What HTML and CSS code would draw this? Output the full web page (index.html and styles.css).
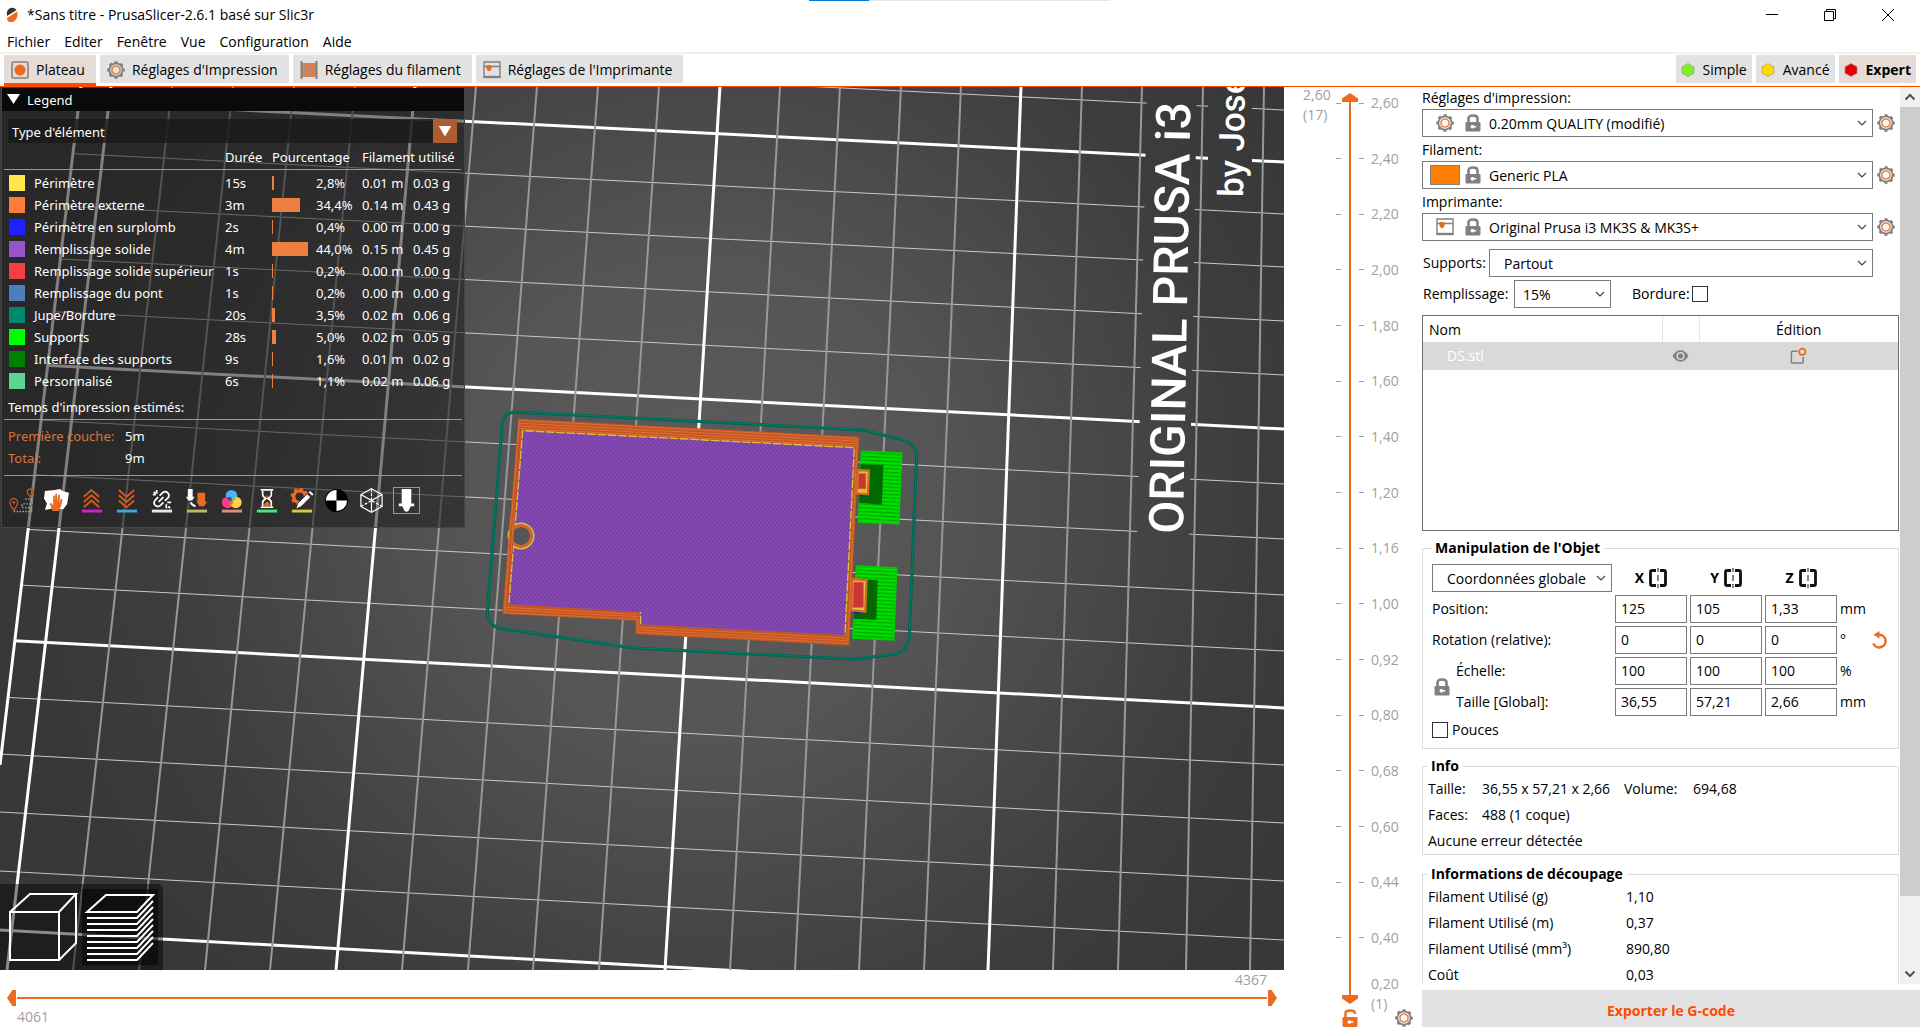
FILE: index.html
```html
<!DOCTYPE html>
<html lang="fr">
<head>
    <meta charset="UTF-8">
    <meta name="viewport" content="width=device-width, initial-scale=1.0">
    <title>*Sans titre - PrusaSlicer-2.6.1 basé sur Slic3r</title>
    <link rel="stylesheet" href="styles.css">
</head>
<body>
    <!-- shared icons -->
    <svg class="defs" aria-hidden="true">
        <symbol id="gear" viewBox="0 0 20 20">
            <circle cx="10" cy="10" r="7.4" fill="none" stroke="#808080" stroke-width="2"/>
            <circle cx="10" cy="10" r="8.6" fill="none" stroke="#808080" stroke-width="2.4" stroke-dasharray="3.4 3.35" stroke-dashoffset="1.7"/>
            <path d="M8.2 5.6h3.6l2.6 2.6v3.6l-2.6 2.6H8.2l-2.6-2.6V8.2z" fill="none" stroke="#ed6b21" stroke-width="1.4"/>
        </symbol>
        <symbol id="lock" viewBox="0 0 16 18">
            <path d="M3.5 9V4.5Q3.5 1.5 8 1.5T12.5 4.5V9" fill="none" stroke="#808080" stroke-width="2.6"/>
            <rect x="0.5" y="8" width="15" height="9.5" rx="1" fill="#808080"/>
            <path d="M5.5 12.7a2 2 0 0 1 3.7-.8h2v1.6h-2a2 2 0 0 1-3.7-.8z" fill="#fff"/>
        </symbol>
        <symbol id="printer" viewBox="0 0 18 18">
            <path d="M1 1h16v15H1zM1 5.5h16" fill="none" stroke="#808080" stroke-width="1.4"/>
            <path d="M0.5 16h17" stroke="#808080" stroke-width="2.4"/>
            <path d="M3.5 4h5v4l-1.5 2H5L3.5 8z" fill="#ed6b21"/>
        </symbol>
        <symbol id="chevron" viewBox="0 0 10 10">
            <path d="M1 3l4 4 4-4" fill="none" stroke="#444" stroke-width="1.2"/>
        </symbol>
        <symbol id="mirror" viewBox="0 0 18 20">
            <path d="M7 2.5H3Q1.5 2.5 1.5 4v12q0 1.5 1.5 1.5h4M11 2.5h4q1.5 0 1.5 1.5v12q0 1.5-1.5 1.5h-4" fill="none" stroke="#111" stroke-width="2.8"/>
            <path d="M9 0v4M9 7v6M9 16v4" stroke="#555" stroke-width="1.4"/>
        </symbol>
        <symbol id="hexagon" viewBox="0 0 14 14">
            <path d="M7 .5l6 3.3v6.4L7 13.5 1 10.2V3.8z" stroke="#999" stroke-width=".6"/>
        </symbol>
    </svg>

    <header>
        <div class="progress"><span></span></div>
        <div class="titlebar">
            <svg class="logo" viewBox="0 0 12 16">
                <path d="M1 9C0 4 3 0 7 1c2 0 3 1 3.5 2z" fill="#333"/>
                <path d="M1 11l10-6.500C13 10 9 16 4 15c-2 0-3-2-3-4z" fill="#ed6b21"/>
            </svg>
            <h1>*Sans titre - PrusaSlicer-2.6.1 basé sur Slic3r</h1>
            <div class="window-buttons">
                <button type="button" aria-label="Réduire"><svg viewBox="0 0 12 12"><path d="M0 5.5h12" stroke="#000"/></svg></button>
                <button type="button" aria-label="Restaurer"><svg viewBox="0 0 12 12"><path d="M.5 2.5h9v9h-9zM2.5 2.5v-2h9v9h-2" fill="none" stroke="#000"/></svg></button>
                <button type="button" aria-label="Fermer"><svg viewBox="0 0 12 12"><path d="M0 0l12 12M12 0L0 12" stroke="#000"/></svg></button>
            </div>
        </div>
        <nav class="menubar">
            <a href="#">Fichier</a>
            <a href="#">Editer</a>
            <a href="#">Fenêtre</a>
            <a href="#">Vue</a>
            <a href="#">Configuration</a>
            <a href="#">Aide</a>
        </nav>
        <div class="toolbar">
            <button type="button" class="tab active">
                <svg viewBox="0 0 18 18"><rect x="1" y="1" width="16" height="16" rx="1.5" fill="none" stroke="#808080" stroke-width="1.6"/><circle cx="9" cy="9" r="5.5" fill="#ed6b21"/></svg>
                Plateau
            </button>
            <button type="button" class="tab"><svg><use href="#gear"/></svg>Réglages d'Impression</button>
            <button type="button" class="tab">
                <svg viewBox="0 0 18 18"><path d="M3 2v14M6 2v14M9 2v14M12 2v14M15 2v14" stroke="#e0804a" stroke-width="2"/><path d="M1.5 0v18M16.5 0v18" stroke="#808080" stroke-width="2"/><path d="M4.5 2v14M7.5 2v14M10.5 2v14M13.5 2v14" stroke="#a98a76" stroke-width="1"/></svg>
                Réglages du filament
            </button>
            <button type="button" class="tab"><svg><use href="#printer"/></svg>Réglages de l'Imprimante</button>
            <div class="modes">
                <button type="button" class="mode simple"><svg><use href="#hexagon"/></svg>Simple</button>
                <button type="button" class="mode avance"><svg><use href="#hexagon"/></svg>Avancé</button>
                <button type="button" class="mode expert active"><svg><use href="#hexagon"/></svg>Expert</button>
            </div>
        </div>
    </header>

    <main>
        <section class="preview">
            <div class="scene">
                <svg class="bed" viewBox="0 87 1284 883" preserveAspectRatio="xMinYMin slice">
                    <defs>
                        <radialGradient id="bedShade" gradientUnits="userSpaceOnUse" cx="700" cy="500" r="680">
                            <stop offset="0" stop-color="#5c5c5c"/>
                            <stop offset=".35" stop-color="#555"/>
                            <stop offset=".8" stop-color="#3d3d3d"/>
                            <stop offset="1" stop-color="#383838"/>
                        </radialGradient>
                        <pattern id="infill" width="9" height="9" patternUnits="userSpaceOnUse" patternTransform="rotate(-42)">
                            <rect width="9" height="9" fill="#8a4cb9"/>
                            <rect width="4" height="9" fill="#733d9e"/>
                        </pattern>
                        <pattern id="support" width="11" height="11" patternUnits="userSpaceOnUse" patternTransform="rotate(3)">
                            <rect width="11" height="11" fill="#00e000"/>
                            <rect width="11" height="4" fill="#00a800"/>
                        </pattern>
                        <clipPath id="bedArea"><path d="M81 86H1284V970H0V765z"/></clipPath>
                    </defs>
                    <rect y="87" width="1284" height="883" fill="url(#bedShade)"/>

                    <g clip-path="url(#bedArea)" fill="none">
                        <path class="thin-h" d="M0 46L1284 110M0 150L1284 214M0 203L1284 267M0 256L1284 321M0 309L1284 375M0 418L1284 484M0 473L1284 539M0 528L1284 595M0 584L1284 651M0 697L1284 765M0 754L1284 823M0 812L1284 881M0 871L1284 940"/>
                        <path class="thick" d="M0 98L1284 162M0 363L1284 429M0 640L1284 708M0 930L1284 1001"/>
                    </g>
                    <!-- gaps left around the printed bed labels -->
                    <path d="M1147 87H1197L1189 540H1137z" fill="url(#bedShade)"/>
                    <path d="M1208 87H1252V205H1208z" fill="url(#bedShade)"/>
                    <g fill="none">
                        <path class="thin-v" d="M172 86L73 970M233 86L139 970M294 86L205 970M355 86L270 970M476 86L402 970M537 86L468 970M598 86L533 970M659 86L599 970M780 86L730 970M840 86L795 970M901 86L859 970M961 86L924 970M1082 86L1053 970M1142 86L1118 970M1203 86L1186 970M1264 86L1250 970"/>
                        <path class="thick" d="M81 86L0 765M111 86L7 970M415 86L336 970M720 86L665 970M1021 86L988 970"/>
                    </g>
                    <text class="bed-title" transform="translate(1183 534) rotate(-89)">ORIGINAL PRUSA i3</text>
                    <text class="bed-author" transform="translate(1243 197) rotate(-89)">by Josef</text>

                    <g transform="translate(470 380) scale(.3333)">
                        <path d="M135 96L1180 150L1305 181Q1338 195 1340 225L1318 775L1302 810L1278 822L1150 838L490 804L85 744Q50 730 52 695L97 130Q101 97 135 96z" fill="none" stroke="#00644f" stroke-width="9"/>
                        <path d="M135 95L1180 149L1305 180Q1338 194 1340 224L1318 775L1302 809L1278 821L1150 837L490 803L85 743Q50 729 52 694L97 129Q101 96 135 95z" fill="none" stroke="#008068" stroke-width="3"/>

                        <path d="M1175 214L1295 219L1286 431L1166 426z" fill="url(#support)" stroke="#00d000" stroke-width="5"/>
                        <path d="M1160 558L1280 564L1271 780L1149 774z" fill="url(#support)" stroke="#00d000" stroke-width="5"/>
                        <path d="M1172 252L1240 256L1236 374L1167 368zM1160 598L1223 600L1219 720L1150 716z" fill="#006a00"/>
                        <path d="M1168 346h28M1150 697h28" stroke="#1a1ab4" stroke-width="5"/>

                        <path d="M145 116L1168 170L1138 797L497 763V722L97 702z" fill="#bf5726"/>
                        <path d="M148 121L1162 175L1133 790L503 757V718L103 698zM151 130L1159 183M152 138L1158 191M153 146L1158 198M108 690L505 710M103 682L500 703M505 742L1128 774M506 750L1128 782" fill="none" stroke="#e56d30" stroke-width="3"/>
                        <path d="M158 152L1153 203L1125 765L512 733L510 696L115 672z" fill="url(#infill)"/>
                        <path d="M117 670L158 152L1153 203L1125 765M512 733L511 696" fill="none" stroke="#d9c23c" stroke-width="4" stroke-dasharray="26 5"/>
                        <circle cx="153" cy="468" r="38" fill="#555" stroke="#d9c23c" stroke-width="5"/>
                        <circle cx="153" cy="468" r="31" fill="none" stroke="#d96429" stroke-width="8"/>
                        <path d="M128 415L120 522" stroke="#bf5726" stroke-width="15"/>
                        <path d="M131 415L123 522M122 415L114 522" stroke="#e56d30" stroke-width="3"/>

                        <path d="M1164 270L1197 272L1194 343L1159 340z" fill="#d9c23c" stroke="#d96429" stroke-width="7"/>
                        <path d="M1167 281H1187V326H1165z" fill="#cc3333" stroke="#b3642a" stroke-width="2"/>
                        <path d="M1147 597L1190 600L1186 695L1144 691z" fill="#d9c23c" stroke="#d96429" stroke-width="7"/>
                        <path d="M1152 607H1180V682H1149z" fill="#cc3333" stroke="#b3642a" stroke-width="2"/>
                    </g>
                </svg>

                <div class="legend">
                    <h2>Legend</h2>
                    <div class="legend-select">
                        <select aria-label="Type d'affichage"><option>Type d'élément</option></select>
                        <span class="legend-arrow"></span>
                    </div>
                    <table class="features">
                        <colgroup><col class="c-swatch"><col class="c-name"><col class="c-time"><col class="c-bar"><col class="c-percent"><col class="c-length"><col></colgroup>
                        <thead>
                            <tr><th></th><th></th><th>Durée</th><th colspan="2">Pourcentage</th><th colspan="2">Filament utilisé</th></tr>
                        </thead>
                        <tbody>
                            <tr><td><i class="sw perimeter"></i></td><td>Périmètre</td><td>15s</td><td><i class="bar" style="width: 2px"></i></td><td>2,8%</td><td>0.01 m</td><td>0.03 g</td></tr>
                            <tr><td><i class="sw external"></i></td><td>Périmètre externe</td><td>3m</td><td><i class="bar" style="width: 28px"></i></td><td>34,4%</td><td>0.14 m</td><td>0.43 g</td></tr>
                            <tr><td><i class="sw overhang"></i></td><td>Périmètre en surplomb</td><td>2s</td><td><i class="bar" style="width: 1px"></i></td><td>0,4%</td><td>0.00 m</td><td>0.00 g</td></tr>
                            <tr><td><i class="sw solid"></i></td><td>Remplissage solide</td><td>4m</td><td><i class="bar" style="width: 36px"></i></td><td>44,0%</td><td>0.15 m</td><td>0.45 g</td></tr>
                            <tr><td><i class="sw top"></i></td><td>Remplissage solide supérieur</td><td>1s</td><td><i class="bar" style="width: 1px"></i></td><td>0,2%</td><td>0.00 m</td><td>0.00 g</td></tr>
                            <tr><td><i class="sw bridge"></i></td><td>Remplissage du pont</td><td>1s</td><td><i class="bar" style="width: 1px"></i></td><td>0,2%</td><td>0.00 m</td><td>0.00 g</td></tr>
                            <tr><td><i class="sw skirt"></i></td><td>Jupe/Bordure</td><td>20s</td><td><i class="bar" style="width: 3px"></i></td><td>3,5%</td><td>0.02 m</td><td>0.06 g</td></tr>
                            <tr><td><i class="sw supports"></i></td><td>Supports</td><td>28s</td><td><i class="bar" style="width: 4px"></i></td><td>5,0%</td><td>0.02 m</td><td>0.05 g</td></tr>
                            <tr><td><i class="sw interface"></i></td><td>Interface des supports</td><td>9s</td><td><i class="bar" style="width: 1px"></i></td><td>1,6%</td><td>0.01 m</td><td>0.02 g</td></tr>
                            <tr><td><i class="sw custom"></i></td><td>Personnalisé</td><td>6s</td><td><i class="bar" style="width: 1px"></i></td><td>1,1%</td><td>0.02 m</td><td>0.06 g</td></tr>
                        </tbody>
                    </table>
                    <h3>Temps d'impression estimés:</h3>
                    <dl>
                        <dt>Première couche:</dt><dd>5m</dd>
                        <dt>Total:</dt><dd>9m</dd>
                    </dl>
                    <div class="tools">
                        <button type="button" aria-label="Déplacements"><svg viewBox="0 0 26 26"><path d="M5 23q-4-5-4-8a4 4 0 0 1 8 0q0 3-4 8z" fill="none" stroke="#b4552a" stroke-width="1.5"/><circle cx="5" cy="15" r="1.5" fill="#b4552a"/><path d="M22 9q-3-3-3-5a3 3 0 0 1 6 0q0 2-3 5z" fill="none" stroke="#b4552a" stroke-width="1.5"/><path d="M5 24.5h18q3-4-2-4h-5q-4 0-2-4h8q4-1 1-5h-7" fill="none" stroke="#aaa" stroke-width="1.5" stroke-dasharray="1.5 1.5"/></svg></button>
                        <button type="button" aria-label="Essuyage"><svg viewBox="0 0 26 26"><path d="M1 3l10-1 6-1 2 2 7 2-2 12-4 5-10-1-9 2 2-7-3-5z" fill="#fff"/><path d="M9 24q-2-5-3-8l1.500-.5L9.500 18V8h1.800v6l.5-8h1.800l.5 8 .8-7h1.800l-.4 8 1.500-4 1.500 1-2 8-2 4z" fill="#ed6b21"/></svg></button>
                        <button type="button" aria-label="Rétractations"><svg viewBox="0 0 26 26"><path d="M5 9l8-7 8 7M5 14.5l8-7 8 7M5 20l8-7 8 7" fill="none" stroke="#d4591c" stroke-width="2"/><path d="M3 24h21" stroke="#cc22cc" stroke-width="3"/></svg></button>
                        <button type="button" aria-label="Dérétractations"><svg viewBox="0 0 26 26"><path d="M5 2l8 7 8-7M5 7.5l8 7 8-7M5 13l8 7 8-7" fill="none" stroke="#d4591c" stroke-width="2"/><path d="M3 24h21" stroke="#44a8d0" stroke-width="3"/></svg></button>
                        <button type="button" aria-label="Coutures"><svg viewBox="0 0 26 26"><path d="M11 8l3-3q3-2.500 5.500 0t0 5.500l-3 3M15 15l-3 3q-3 2.500-5.500 0t0-5.500l3-3M10 14.500l5-5M8 2v4M4 7h3M19 15h4M18 17v4M5 4l2 2M20 19l2 2" fill="none" stroke="#fff" stroke-width="1.8"/><path d="M3 24h21" stroke="#e6e6e6" stroke-width="3"/></svg></button>
                        <button type="button" aria-label="Changements d'outil"><svg viewBox="0 0 26 26"><path d="M4 1h5v8h2l-2.500 4h-4L2 9h2z" fill="#fff"/><path d="M14 5h8v9h2l-3 5h-5l-3-5h1z" fill="#ed6b21"/><path d="M7 15q1 3 5 4" fill="none" stroke="#fff" stroke-width="2"/><path d="M3 24h21" stroke="#c0b860" stroke-width="3"/></svg></button>
                        <button type="button" aria-label="Changements de couleur"><svg viewBox="0 0 26 26"><circle cx="13" cy="8" r="6" fill="#48b4f8"/><circle cx="9" cy="15" r="6" fill="#ff3b85"/><circle cx="17.5" cy="15" r="6" fill="#ffd048"/><path d="M13 11.500q3 3 0 7q-3-4 0-7z" fill="#ed6b21"/><path d="M12.500 10q3-1 5.500 0-1 3-4 4z" fill="#7cc060"/><path d="M8 10q3-1 5 0v4q-4-1-5-4z" fill="#2d4ea0"/><path d="M3 24h21" stroke="#d99080" stroke-width="3"/></svg></button>
                        <button type="button" aria-label="Pauses d'impression"><svg viewBox="0 0 26 26"><path d="M7 2h13M7 20h13M9 3v4q0 2 3.500 4Q9 13 9 15v4M18 3v4q0 2-3.500 4 3.500 2 3.500 4v4" fill="none" stroke="#fff" stroke-width="1.7"/><path d="M10.500 19q0-4 3-4.500t3 4.500zM11.500 8h4l-2 2z" fill="#ed6b21"/><path d="M3 24h21" stroke="#48e878" stroke-width="3"/></svg></button>
                        <button type="button" aria-label="G-code personnalisé"><svg viewBox="0 0 26 26"><circle cx="11" cy="9" r="6" fill="none" stroke="#ed6b21" stroke-width="3.5" stroke-dasharray="28 10" stroke-dashoffset="-9"/><circle cx="11" cy="9" r="8" fill="none" stroke="#ed6b21" stroke-width="2.6" stroke-dasharray="3.2 3.08"/><path d="M9 16L19 6l3.500 3.500-10 10L7 22z" fill="#fff" stroke="#2b2b2b"/><path d="M20.500 4.500L22 3l3.500 3.500L24 8z" fill="#fff"/><path d="M3 24h21" stroke="#d8c840" stroke-width="3"/></svg></button>
                        <button type="button" aria-label="Centre de gravité"><svg viewBox="0 0 26 26"><circle cx="13" cy="13" r="12" fill="#000"/><path d="M13 13V2A11 11 0 0 0 2 13zM13 13h11a11 11 0 0 1-11 11z" fill="#fff"/></svg></button>
                        <button type="button" aria-label="Coques"><svg viewBox="0 0 26 26"><path d="M13 .8l11 6v12.400l-11 6-11-6V6.800zM2 6.800L13 13l11-6.200M13 13v12" fill="none" stroke="#fff" stroke-width="1.3"/><path d="M2 19.200L13 13l11 6.200M13 1v12" fill="none" stroke="#fff" stroke-width="1.3" stroke-dasharray="3 1.5"/></svg></button>
                        <button type="button" class="selected" aria-label="Marqueur d'outil"><svg viewBox="0 0 26 26"><path d="M8 1h10v15h3v3h-3.500L15 24q-2 1.500-4 0l-2.500-5H5v-3h3z" fill="#fff"/></svg></button>
                    </div>
                </div>

                <div class="views">
                    <button type="button" aria-label="Vue éditeur 3D"><svg viewBox="0 0 76 76"><path d="M6 23h49v48H6zM6 23L26 5h46L55 23M72 5v49L55 71" fill="none" stroke="#fff" stroke-width="2"/></svg></button>
                    <button type="button" class="current" aria-label="Aperçu"><svg viewBox="0 0 76 76"><path d="M5 23L24 6h47L55 23zM5 29h50l16-17M5 35h50l16-17M5 41h50l16-17M5 47h50l16-17M5 53h50l16-17M5 59h50l16-17M5 65h50l16-17M5 71h50l16-17" fill="none" stroke="#fff" stroke-width="2"/></svg></button>
                </div>
            </div>

            <div class="moves">
                <output class="moves-max">4367</output>
                <div class="moves-track">
                    <input class="lower" type="range" min="4061" max="4367" value="4061" aria-label="Premier mouvement">
                    <input class="upper" type="range" min="4061" max="4367" value="4367" aria-label="Dernier mouvement">
                </div>
                <output class="moves-min">4061</output>
            </div>
        </section>

        <section class="layers">
            <p class="layer-max">2,60<br>(17)</p>
            <ol>
                <li><i></i><i></i>2,60</li>
                <li><i></i><i></i>2,40</li>
                <li><i></i><i></i>2,20</li>
                <li><i></i><i></i>2,00</li>
                <li><i></i><i></i>1,80</li>
                <li><i></i><i></i>1,60</li>
                <li><i></i><i></i>1,40</li>
                <li><i></i><i></i>1,20</li>
                <li><i></i><i></i>1,16</li>
                <li><i></i><i></i>1,00</li>
                <li><i></i><i></i>0,92</li>
                <li><i></i><i></i>0,80</li>
                <li><i></i><i></i>0,68</li>
                <li><i></i><i></i>0,60</li>
                <li><i></i><i></i>0,44</li>
                <li><i></i><i></i>0,40</li>
            </ol>
            <p class="layer-min">0,20<br>(1)</p>
            <div class="layers-track">
                <input class="lower" type="range" min="1" max="17" value="1" aria-label="Couche inférieure">
                <input class="upper" type="range" min="1" max="17" value="17" aria-label="Couche supérieure">
            </div>
            <button type="button" class="layer-lock" aria-label="Verrouiller"><svg viewBox="0 0 16 18"><path d="M3.500 9V4q0-2.500 4.500-2.500t5 2.500v1" fill="none" stroke="#ed6b21" stroke-width="2.4"/><rect x=".5" y="8" width="15" height="10" rx="1" fill="#ed6b21"/><path d="M5.500 13a2 2 0 0 1 3.700-.8h2v1.600h-2a2 2 0 0 1-3.700-.8z" fill="#fff"/></svg></button>
            <button type="button" class="layer-gear" aria-label="Options"><svg><use href="#gear"/></svg></button>
        </section>

        <aside>
            <div class="scroll-area">
                <div class="settings">
                    <div class="preset">
                        <label for="print">Réglages d'impression:</label>
                        <div class="preset-row">
                            <div class="combo"><svg class="icon"><use href="#gear"/></svg><svg class="lock"><use href="#lock"/></svg><select id="print"><option>0.20mm QUALITY (modifié)</option></select><svg class="chev"><use href="#chevron"/></svg></div>
                            <button type="button" aria-label="Modifier"><svg><use href="#gear"/></svg></button>
                        </div>
                    </div>
                    <div class="preset">
                        <label for="filament">Filament:</label>
                        <div class="preset-row">
                            <div class="combo"><span class="color"></span><svg class="lock"><use href="#lock"/></svg><select id="filament"><option>Generic PLA</option></select><svg class="chev"><use href="#chevron"/></svg></div>
                            <button type="button" aria-label="Modifier"><svg><use href="#gear"/></svg></button>
                        </div>
                    </div>
                    <div class="preset">
                        <label for="machine">Imprimante:</label>
                        <div class="preset-row">
                            <div class="combo"><svg class="icon"><use href="#printer"/></svg><svg class="lock"><use href="#lock"/></svg><select id="machine"><option>Original Prusa i3 MK3S &amp; MK3S+</option></select><svg class="chev"><use href="#chevron"/></svg></div>
                            <button type="button" aria-label="Modifier"><svg><use href="#gear"/></svg></button>
                        </div>
                    </div>

                    <div class="option-row supports-row">
                        <label for="supports">Supports:</label>
                        <div class="combo supports-combo"><select id="supports"><option>Partout</option></select><svg class="chev"><use href="#chevron"/></svg></div>
                    </div>
                    <div class="option-row infill-row">
                        <label for="infillRate">Remplissage:</label>
                        <div class="combo infill-combo"><select id="infillRate"><option>15%</option></select><svg class="chev"><use href="#chevron"/></svg></div>
                        <label class="brim" for="brim">Bordure:</label>
                        <input type="checkbox" id="brim">
                    </div>

                    <div class="objects">
                        <table>
                            <thead><tr><th class="o-name">Nom</th><th class="o-eye"></th><th class="o-edit">Édition</th></tr></thead>
                            <tbody>
                                <tr>
                                    <td>DS.stl</td>
                                    <td><svg class="eye" viewBox="0 0 18 14"><path d="M.5 7Q4 1 9 1t8.500 6Q14 13 9 13T.5 7z" fill="#808080"/><circle cx="9" cy="7" r="3.5" fill="#808080" stroke="#d9d9d9" stroke-width="1.6"/></svg></td>
                                    <td><svg class="edit" viewBox="0 0 18 18"><path d="M8 4H2.500Q1.500 4 1.500 5v10.500q0 1 1 1H13q1 0 1-1V10" fill="none" stroke="#808080" stroke-width="1.6"/><circle cx="13" cy="4.5" r="3.3" fill="none" stroke="#ed6b21" stroke-width="1.8"/></svg></td>
                                </tr>
                            </tbody>
                        </table>
                    </div>

                    <fieldset class="manipulation">
                        <legend>Manipulation de l'Objet</legend>
                        <div class="axes">
                            <div class="combo coords"><select aria-label="Repère"><option>Coordonnées globales</option></select><svg class="chev"><use href="#chevron"/></svg></div>
                            <b>X <svg><use href="#mirror"/></svg></b>
                            <b>Y <svg><use href="#mirror"/></svg></b>
                            <b>Z <svg><use href="#mirror"/></svg></b>
                            <span class="unit"></span>

                            <label class="wide" for="px">Position:</label>
                            <input type="text" id="px" value="125">
                            <input type="text" value="105" aria-label="Position Y">
                            <input type="text" value="1,33" aria-label="Position Z">
                            <span class="unit">mm</span>

                            <label class="wide" for="rx">Rotation (relative):</label>
                            <input type="text" id="rx" value="0">
                            <input type="text" value="0" aria-label="Rotation Y">
                            <input type="text" value="0" aria-label="Rotation Z">
                            <span class="unit">°<button type="button" aria-label="Réinitialiser la rotation"><svg viewBox="0 0 18 20"><path d="M6 4.500h3.500a6.700 6.700 0 1 1-7 9" fill="none" stroke="#ed6b21" stroke-width="2.6"/><path d="M2.500 4.500L9 .5v8z" fill="#ed6b21"/></svg></button></span>

                            <svg class="scale-lock"><use href="#lock"/></svg>
                            <label for="sx">Échelle:</label>
                            <input type="text" id="sx" value="100">
                            <input type="text" value="100" aria-label="Échelle Y">
                            <input type="text" value="100" aria-label="Échelle Z">
                            <span class="unit">%</span>

                            <label for="tx">Taille [Global]:</label>
                            <input type="text" id="tx" value="36,55">
                            <input type="text" value="57,21" aria-label="Taille Y">
                            <input type="text" value="2,66" aria-label="Taille Z">
                            <span class="unit">mm</span>
                        </div>
                        <label class="inches"><input type="checkbox">Pouces</label>
                    </fieldset>

                    <fieldset class="info">
                        <legend>Info</legend>
                        <p><span class="key">Taille:</span><span class="size">36,55 x 57,21 x 2,66</span><span class="volume">Volume:</span>694,68</p>
                        <p><span class="key">Faces:</span>488 (1 coque)</p>
                        <p>Aucune erreur détectée</p>
                    </fieldset>

                    <fieldset class="info slicing">
                        <legend>Informations de découpage</legend>
                        <p><span>Filament Utilisé (g)</span>1,10</p>
                        <p><span>Filament Utilisé (m)</span>0,37</p>
                        <p><span>Filament Utilisé (mm³)</span>890,80</p>
                        <p><span>Coût</span>0,03</p>
                    </fieldset>
                </div>
                <div class="scrollbar">
                    <svg viewBox="0 0 20 20"><path d="M5.500 12.500L10 8l4.500 4.500" fill="none" stroke="#505050" stroke-width="2"/></svg>
                    <div class="thumb"></div>
                    <svg viewBox="0 0 20 20"><path d="M5.500 7.500L10 12l4.500-4.500" fill="none" stroke="#505050" stroke-width="2"/></svg>
                </div>
            </div>
            <button type="button" class="export">Exporter le G-code</button>
        </aside>
    </main>
</body>
</html>
```

FILE: styles.css
```css
* {
    box-sizing: border-box;
}
body {
    margin: 0;
    height: 100vh;
    display: flex;
    flex-direction: column;
    overflow: hidden;
    background: #fff;
    color: #000;
    font-family: "Open Sans", "Noto Sans", sans-serif;
    font-size: 14px;
    line-height: 20px;
}
h1, h2, h3, p, ol, dl, dd {
    margin: 0;
    padding: 0;
    font-size: inherit;
    font-weight: normal;
}
button, input, select {
    font: inherit;
    color: inherit;
    margin: 0;
}
button {
    padding: 0;
    border: none;
    background: none;
}
svg {
    display: block;
    flex: none;
}
.defs {
    position: absolute;
    width: 0;
    height: 0;
}

/* header */
.progress {
    position: absolute;
    top: 0;
    left: 809px;
    width: 301px;
    height: 1px;
    background: #e5e5e5;
}
.progress span {
    display: block;
    width: 60px;
    height: 1px;
    background: #0078d7;
}
.titlebar {
    display: flex;
    align-items: center;
    height: 29px;
    padding-left: 6px;
    gap: 9px;
}
.logo {
    width: 12px;
    height: 16px;
}
.window-buttons {
    display: flex;
    margin-left: auto;
    padding-right: 3px;
}
.window-buttons button {
    display: flex;
    justify-content: center;
    width: 58px;
}
.window-buttons svg {
    width: 12px;
    height: 12px;
}
.menubar {
    display: flex;
    gap: 14px;
    height: 25px;
    padding: 3px 7px 0;
    border-bottom: 2px solid #f0f0f0;
}
.menubar a {
    color: #000;
    text-decoration: none;
}
.toolbar {
    display: flex;
    gap: 4px;
    height: 33px;
    padding: 1px 4px 0;
    border-bottom: 1px solid #ff4a00;
}
.tab, .mode {
    display: flex;
    align-items: center;
    height: 28px;
    padding-top: 1px;
    background: #e2e2e2;
}
.tab {
    gap: 7px;
    padding-left: 7px;
    padding-right: 11px;
}
.tab svg {
    width: 18px;
    height: 18px;
}
.tab.active {
    height: 31px;
    border-bottom: 3px solid #ff4a00;
}
.tab.active, .mode.active {
    background: #e5dcd8;
}
.modes {
    display: flex;
    gap: 4px;
    margin-left: auto;
}
.mode {
    gap: 8px;
    padding-left: 5px;
    padding-right: 5px;
}
.mode svg {
    width: 14px;
    height: 14px;
}
.simple { fill: #7cf025; }
.avance { fill: #ffdc00; }
.expert { fill: #e70000; }
.expert {
    font-weight: bold;
}

main {
    flex: 1;
    display: flex;
    min-height: 0;
}

/* 3D preview */
.preview {
    flex: 1;
    display: flex;
    flex-direction: column;
    min-width: 0;
}
.scene {
    flex: 1;
    position: relative;
    min-height: 0;
    overflow: hidden;
    background: #3d3d3d;
}
.bed {
    width: 100%;
    height: 100%;
}
.thin-h {
    stroke: #c8c8c8;
    stroke-width: 1;
}
.thin-v {
    stroke: #989898;
    stroke-width: 2;
}
.thick {
    stroke: #fff;
    stroke-width: 3;
}
.bed-title, .bed-author {
    font-family: Roboto, sans-serif;
    font-weight: 500;
    fill: #fff;
}
.bed-title {
    font-size: 48px;
}
.bed-author {
    font-size: 35px;
}

.legend {
    position: absolute;
    top: 1px;
    left: 1px;
    width: 464px;
    height: 440px;
    background: rgba(29, 29, 29, 0.56);
    border: 1px solid #45454d;
    border-top: none;
    color: #fff;
    font-family: "Noto Sans", sans-serif;
    font-size: 13px;
}
.legend h2 {
    display: flex;
    align-items: center;
    gap: 7px;
    height: 23px;
    padding: 1px 5px 0;
    background: #0a0a0a;
}
.legend h2::before {
    content: "";
    width: 13px;
    height: 10px;
    margin-top: -2px;
    background: #fff;
    clip-path: polygon(0 0, 100% 0, 50% 100%);
}
.legend-select {
    display: flex;
    height: 24px;
    margin: 8px 7px 0 6px;
    background: rgba(25, 25, 25, 0.8);
}
.legend-select select {
    flex: 1;
    padding: 2px 4px 0;
    border: none;
    background: none;
    appearance: none;
}
.legend-arrow {
    display: flex;
    justify-content: center;
    align-items: center;
    width: 24px;
    background: #ad5d31;
}
.legend-arrow::before {
    content: "";
    width: 13px;
    height: 11px;
    background: #fff;
    clip-path: polygon(0 0, 100% 0, 50% 100%);
}
.features {
    width: 457px;
    margin: 2px 2px 0;
    border-collapse: collapse;
    table-layout: fixed;
}
.features th {
    height: 24px;
    padding: 0;
    font-weight: normal;
    text-align: left;
    white-space: nowrap;
    border-bottom: 1px solid #ed8040;
}
.features td {
    height: 22px;
    padding: 0;
    white-space: nowrap;
}
.features tbody::before {
    content: "";
    display: block;
    height: 2px;
}
.c-swatch { width: 30px; }
.c-name { width: 191px; }
.c-time { width: 47px; }
.c-bar { width: 44px; }
.c-percent { width: 46px; }
.c-length { width: 51px; }
.sw {
    display: block;
    width: 16px;
    height: 16px;
    margin-left: 5px;
}
.bar {
    display: block;
    height: 14px;
    background: #ed8040;
}
.perimeter { background: #ffe64d; }
.external { background: #ff7d38; }
.overhang { background: #1f1fff; }
.solid { background: #9654cc; }
.top { background: #f04040; }
.bridge { background: #4d80ba; }
.skirt { background: #00876e; }
.supports { background: #00ff00; }
.interface { background: #008000; }
.custom { background: #5ed194; }
.legend h3 {
    margin: 2px 2px 0;
    padding: 3px 4px 2px;
    border-bottom: 1px solid #ed8040;
}
.legend dl {
    display: grid;
    grid-template-columns: 117px 1fr;
    margin: 0 2px;
    padding: 5px 4px 6px;
    line-height: 22px;
    border-bottom: 1px solid #ed8040;
}
.legend dt {
    color: #d9743c;
}
.tools {
    display: flex;
    gap: 8px;
    padding: 11px 6px 0;
}
.tools button {
    width: 27px;
    height: 27px;
    border: 1px solid transparent;
}
.tools svg {
    width: 25px;
    height: 25px;
}
.tools .selected {
    border-color: #ed8040;
}

.views {
    position: absolute;
    left: 0;
    bottom: 0;
    display: flex;
    gap: 2px;
    padding: 5px 5px 5px 4px;
    background: rgba(0, 0, 0, 0.45);
    border-top-right-radius: 6px;
}
.views button, .views svg {
    width: 76px;
    height: 76px;
}
.views .current {
    background: rgba(0, 0, 0, 0.5);
}

/* sliders */
.moves {
    display: flex;
    flex-direction: column;
    height: 57px;
    padding: 0 7px;
    color: #a0a0a0;
}
.moves-max {
    align-self: flex-end;
    padding-right: 10px;
}
.moves-min {
    padding: 2px 10px 0;
}
.moves-track {
    position: relative;
    height: 20px;
    margin-top: 1px;
    background: linear-gradient(#ed6b21, #ed6b21) center / calc(100% - 20px) 2px no-repeat;
}
.moves-track input, .layers-track input {
    position: absolute;
    top: 0;
    left: 0;
    width: 100%;
    height: 100%;
    background: none;
    appearance: none;
    pointer-events: none;
}
.moves-track input::-webkit-slider-thumb {
    appearance: none;
    width: 9px;
    height: 16px;
    background: #ed6b21;
    pointer-events: auto;
}
.moves-track .lower::-webkit-slider-thumb {
    clip-path: polygon(0 50%, 60% 0, 100% 0, 100% 100%, 60% 100%);
}
.moves-track .upper::-webkit-slider-thumb {
    clip-path: polygon(100% 50%, 40% 0, 0 0, 0 100%, 40% 100%);
}
.layers {
    position: relative;
    display: flex;
    flex-direction: column;
    width: 138px;
    padding-top: 6px;
    color: #a0a0a0;
}
.layers ol {
    flex: 1;
    display: flex;
    flex-direction: column;
    justify-content: space-between;
    padding-left: 52px;
    list-style: none;
}
.layers li {
    display: flex;
    align-items: center;
}
.layers li i {
    width: 5px;
    height: 1px;
    margin-right: 18px;
    background: #a0a0a0;
}
.layers li i + i {
    margin-right: 7px;
}
.layer-max {
    position: absolute;
    top: -2px;
    left: 19px;
}
.layer-min {
    height: 79px;
    padding: 26px 0 0 87px;
}
.layers-track {
    position: absolute;
    top: 6px;
    bottom: 23px;
    left: 56px;
    width: 20px;
    background: linear-gradient(#ed6b21, #ed6b21) center / 2px calc(100% - 16px) no-repeat;
}
.layers-track input {
    writing-mode: vertical-lr;
    direction: rtl;
}
.layers-track input::-webkit-slider-thumb {
    appearance: none;
    width: 16px;
    height: 9px;
    background: #ed6b21;
    pointer-events: auto;
}
.layers-track .upper::-webkit-slider-thumb {
    clip-path: polygon(50% 0, 100% 60%, 100% 100%, 0 100%, 0 60%);
}
.layers-track .lower::-webkit-slider-thumb {
    clip-path: polygon(50% 100%, 100% 40%, 100% 0, 0 0, 0 40%);
}
.layer-lock, .layer-gear {
    position: absolute;
    bottom: 0;
    left: 58px;
}
.layer-lock svg {
    width: 16px;
    height: 18px;
}
.layer-gear {
    left: 111px;
}
.layer-gear svg, .preset-row button svg {
    width: 18px;
    height: 18px;
}

/* sidebar */
aside {
    display: flex;
    flex-direction: column;
    width: 498px;
}
.scroll-area {
    flex: 1;
    display: flex;
    gap: 1px;
    min-height: 0;
    overflow: hidden;
}
.settings {
    flex: 1;
}
.preset {
    margin-bottom: 2px;
}
.preset label {
    display: block;
    height: 22px;
    padding-top: 1px;
}
.preset-row {
    display: flex;
    align-items: center;
    gap: 4px;
    padding-right: 4px;
}
.combo {
    flex: 1;
    display: flex;
    align-items: center;
    height: 28px;
    border: 1px solid #7a7a7a;
    background: #fff;
}
.preset .combo {
    padding-left: 7px;
}
.combo select {
    flex: 1;
    min-width: 0;
    height: 26px;
    padding: 1px 0 0 8px;
    border: none;
    background: none;
    appearance: none;
}
.combo .icon {
    width: 18px;
    height: 18px;
    margin: 0 11px 0 6px;
}
.color {
    width: 30px;
    height: 20px;
    margin-right: 5px;
    border: 1px solid #808080;
    background: #ff8000;
}
.combo .lock {
    width: 16px;
    height: 18px;
}
.chev {
    width: 10px;
    height: 10px;
    margin: 0 5px;
}
.option-row {
    display: flex;
    align-items: center;
    margin-bottom: 3px;
    padding-left: 1px;
}
.option-row label {
    width: 66px;
}
.supports-row {
    margin-top: 8px;
    padding-right: 26px;
}
.supports-combo select {
    padding-left: 14px;
}
.infill-row label {
    width: 91px;
}
.infill-combo {
    flex: none;
    width: 97px;
}
.infill-row .brim {
    width: 60px;
    margin-left: 21px;
}
input[type="checkbox"] {
    appearance: none;
    width: 16px;
    height: 16px;
    border: 1px solid #333;
    background: #fff;
}
.objects {
    min-height: 216px;
    margin-top: 7px;
    border: 1px solid #6e6e6e;
}
.objects table {
    width: 100%;
    border-collapse: collapse;
    table-layout: fixed;
}
.objects th {
    height: 26px;
    padding: 1px 0 0;
    font-weight: normal;
}
.objects .o-name {
    padding-left: 6px;
    text-align: left;
}
.objects .o-eye {
    width: 37px;
    border: 1px solid #e5e5e5;
    border-width: 0 1px;
}
.objects .o-edit {
    width: 199px;
}
.objects td {
    height: 28px;
    padding: 0;
    background: #d9d9d9;
    color: #fff;
}
.objects td:first-child {
    padding-left: 24px;
}
.objects td svg {
    margin: 0 auto;
}
.eye {
    width: 17px;
    height: 14px;
}
.edit {
    width: 17px;
    height: 18px;
}
fieldset {
    margin: 7px 0 0;
    padding: 0 0 0 5px;
    border: 1px solid #dcdcdc;
    min-width: 0;
}
legend {
    padding: 0 4px 0 3px;
    font-weight: bold;
}
.manipulation {
    padding: 6px 9px 8px;
}
.axes {
    display: grid;
    grid-template-columns: 21px 156px repeat(3, 72px) 1fr;
    grid-auto-rows: 28px;
    gap: 3px;
    align-items: center;
}
.coords, .wide {
    grid-column: span 2;
}
.coords select {
    margin-right: 5px;
    padding-left: 14px;
}
.axes b {
    display: flex;
    align-items: center;
    justify-content: center;
    gap: 5px;
}
.axes b svg {
    width: 18px;
    height: 20px;
}
.axes input {
    width: 100%;
    height: 28px;
    padding: 0 5px 2px;
    border: 1px solid #7a7a7a;
}
.unit {
    display: flex;
    justify-content: space-between;
}
.unit svg {
    width: 17px;
    height: 20px;
    margin-right: 1px;
}
.scale-lock {
    grid-row: span 2;
    width: 16px;
    height: 18px;
    margin-left: 2px;
}
.inches {
    display: flex;
    align-items: center;
    gap: 4px;
    height: 20px;
    margin-top: 4px;
}
.info p {
    display: flex;
    height: 26px;
    padding-top: 3px;
}
.info .key {
    width: 54px;
}
.info .size {
    width: 142px;
}
.info .volume {
    width: 69px;
}
.info.slicing {
    margin-top: 9px;
}
.slicing p span {
    width: 198px;
}
.scrollbar {
    display: flex;
    flex-direction: column;
    width: 20px;
    background: #f0f0f0;
}
.scrollbar svg {
    width: 20px;
    height: 20px;
}
.thumb {
    flex: 1;
    margin-bottom: 68px;
    background: #cdcdcd;
}
.export {
    height: 37px;
    margin-top: 6px;
    padding-top: 4px;
    background: #e2e2e2;
    color: #ff4a00;
    font-weight: bold;
}
```
